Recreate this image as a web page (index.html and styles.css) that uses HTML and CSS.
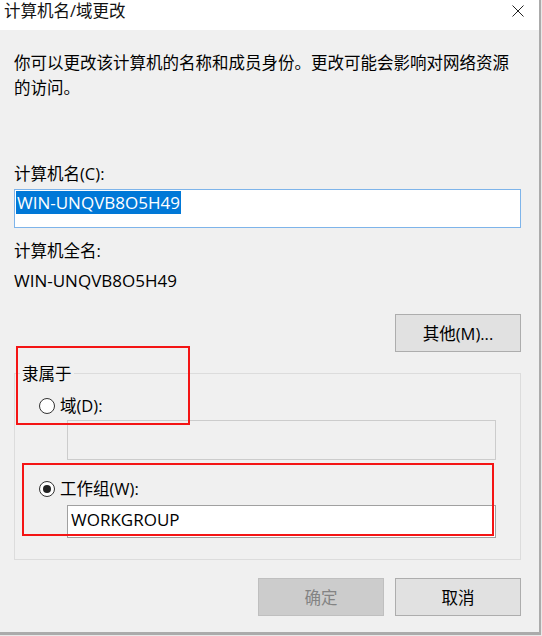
FILE: index.html
```html
<!DOCTYPE html>
<html lang="zh-CN">
<head>
<meta charset="utf-8">
<title>计算机名/域更改</title>
<link rel="stylesheet" href="styles.css">
</head>
<body>
<div class="window">
  <div class="titlebar">
    <span class="title">计算机名/域更改</span>
    <svg class="close" width="12" height="12" viewBox="0 0 12 12" aria-label="关闭">
      <path d="M0.5 0.5 L11.5 11.5 M11.5 0.5 L0.5 11.5" stroke="#222" stroke-width="1" fill="none"/>
    </svg>
  </div>
  <div class="content">
    <p class="desc">你可以更改该计算机的名称和成员身份。更改可能会影响对网络资源<br>的访问。</p>
    <div class="label label-first">计算机名(C):</div>
    <div class="textbox textbox-focus"><span class="selection latin">WIN-UNQVB8O5H49</span></div>
    <div class="label label-second">计算机全名:</div>
    <div class="value latin">WIN-UNQVB8O5H49</div>
    <div class="row-right">
      <button class="btn">其他(M)...</button>
    </div>
    <fieldset class="group">
      <legend class="group-title">隶属于</legend>
      <label class="radio-row radio-first">
        <span class="radio"></span>
        <span>域(D):</span>
      </label>
      <div class="textbox sub-input disabled-input"></div>
      <label class="radio-row radio-second">
        <span class="radio radio-checked"></span>
        <span>工作组(W):</span>
      </label>
      <div class="textbox sub-input wg-input latin">WORKGROUP</div>
    </fieldset>
    <div class="actions">
      <button class="btn btn-disabled">确定</button>
      <button class="btn">取消</button>
    </div>
  </div>
  <div class="mark mark-one"></div>
  <div class="mark mark-two"></div>
</div>
</body>
</html>
```
FILE: styles.css
```css
* {
  box-sizing: border-box;
}

html, body {
  margin: 0;
  padding: 0;
  background: #e8e8e8;
}

body {
  font-family: "Open Sans", "Noto Sans CJK SC", sans-serif;
  font-size: 16.5px;
  color: #000;
}

.latin {
  font-size: 17px;
}

.window {
  position: relative;
  width: 541px;
  height: 635px;
  background: #f0f0f0;
  border-right: 2px solid #ababab;
  border-bottom: 3px solid #ababab;
}

.titlebar {
  height: 30px;
  background: #ffffff;
  display: flex;
  justify-content: space-between;
  align-items: flex-start;
  padding: 0 15px 0 4px;
}

.title {
  line-height: 22px;
  color: #111;
}

.close {
  margin-top: 5px;
  display: block;
}

.content {
  padding: 0 18px 0 14px;
}

.desc {
  margin: 20px 0 0 0;
  line-height: 25px;
}

.label {
  line-height: 25px;
}

.label-first {
  margin-top: 61px;
}

.label-second {
  margin-top: 10px;
}

.value {
  margin-top: 5px;
  line-height: 25px;
}

.textbox {
  background: #ffffff;
  border: 1px solid #7a7a7a;
}

.textbox-focus {
  margin-top: 3px;
  height: 39px;
  border-color: #7eb4ea;
  padding: 1px 0 0 1px;
}

.selection {
  display: inline-block;
  background: #0078d7;
  color: #ffffff;
  line-height: 23px;
  padding: 0 1px;
}

.row-right {
  display: flex;
  justify-content: flex-end;
  margin-top: 21px;
}

.btn {
  width: 126px;
  height: 38px;
  background: #e1e1e1;
  border: 1px solid #adadad;
  font: inherit;
  color: #000;
  padding: 0;
}

.btn-disabled {
  background: #cccccc;
  border-color: #bfbfbf;
  color: #838383;
}

.group {
  margin: 9px 0 0 0;
  padding: 0 0 21px 0;
  border: 1px solid #dcdcdc;
  min-width: 0;
}

.group-title {
  margin-left: 5px;
  padding: 0 2px;
  line-height: 25px;
}

.radio-row {
  display: flex;
  align-items: center;
  gap: 5px;
  margin-left: 24px;
  line-height: 25px;
}

.radio-first {
  margin-top: 7px;
}

.radio-second {
  margin-top: 16px;
}

.radio {
  width: 16px;
  height: 16px;
  border-radius: 50%;
  border: 1px solid #333333;
  background: #ffffff;
  display: flex;
  align-items: center;
  justify-content: center;
}

.radio-checked::after {
  content: "";
  width: 8px;
  height: 8px;
  border-radius: 50%;
  background: #222222;
}

.sub-input {
  margin-left: 52px;
  width: 429px;
}

.disabled-input {
  margin-top: 2px;
  height: 40px;
  background: #f0f0f0;
  border-color: #cccccc;
}

.wg-input {
  margin-top: 4px;
  height: 33px;
  border-color: #a0a0a0;
  padding: 0 0 0 3px;
  line-height: 28px;
}

.actions {
  display: flex;
  justify-content: flex-end;
  gap: 11px;
  margin-top: 18px;
}

.mark {
  position: absolute;
  border: 2px solid #f41414;
  pointer-events: none;
}

.mark-one {
  left: 16px;
  top: 346px;
  width: 174px;
  height: 79px;
}

.mark-two {
  left: 22px;
  top: 463px;
  width: 472px;
  height: 73px;
}
```
